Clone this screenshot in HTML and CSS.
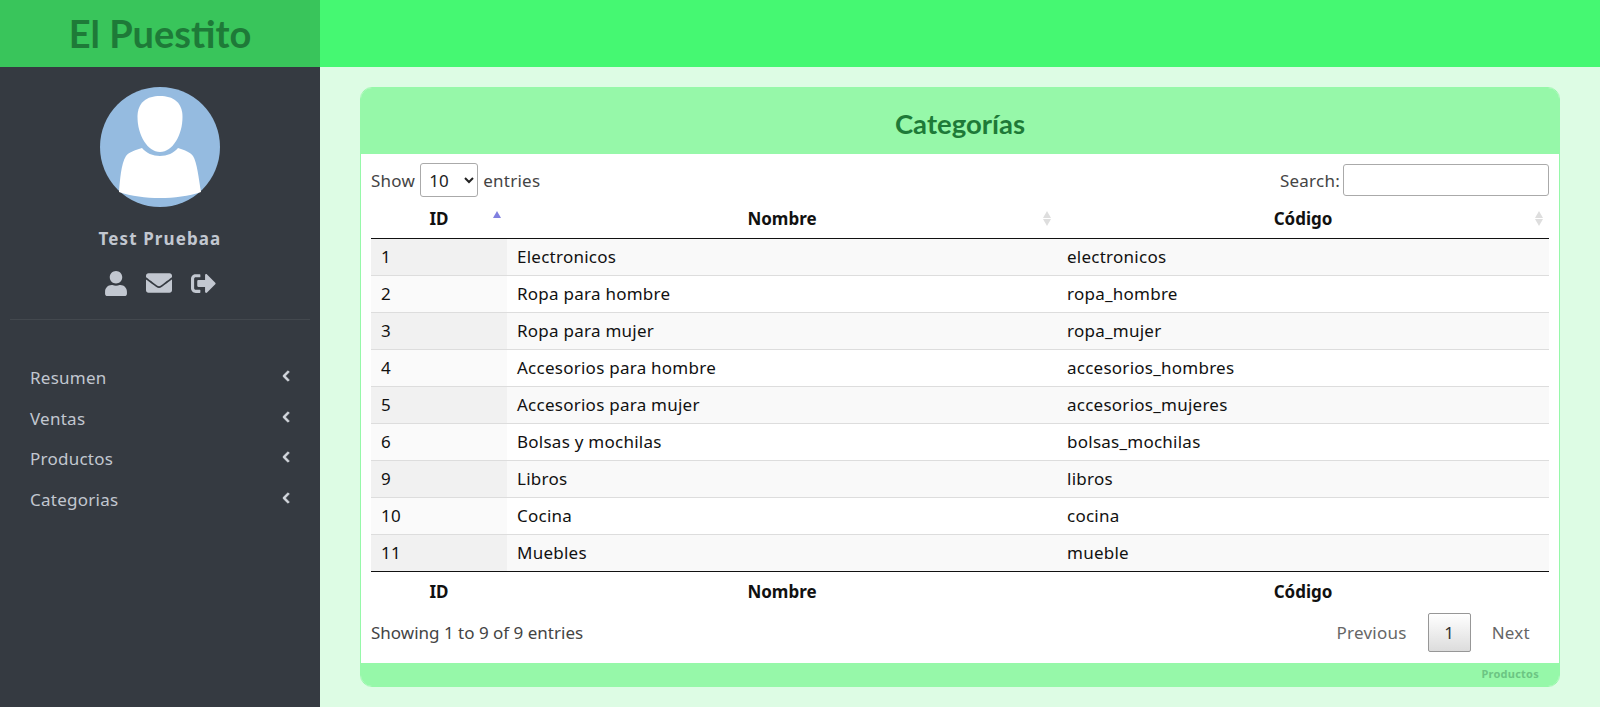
FILE: index.html
```html
<!DOCTYPE html>
<html>
<head>
  <meta charset="utf-8">
  <title>Categorías</title>
  <link rel="stylesheet" href="styles.css">
</head>
<body>
<div class="layout">
  <aside class="sidebar">
    <div class="brand">El Puestito</div>
    <div class="profile">
      <svg class="avatar" viewBox="0 0 120 120">
        <circle cx="60" cy="60" r="60" fill="#95bbe0"/>
        <path d="M60 9c13 0 22.500 6 22.500 21 0 18-10 35-22.500 35S37.500 48 37.500 30C37.500 15 47 9 60 9z" fill="#fff"/>
        <path d="M42 61c4 5 11 8 18 8s14-3 18-8c6 2 12 4 15 8 4 6 6 24 8 36-12 4-27 6-41 6s-29-2-41-6c1-12 2-28 7-36 3-4 10-6 16-8z" fill="#fff"/>
      </svg>
      <div class="username">Test Pruebaa</div>
      <div class="profile-icons">
        <svg class="icon-user" viewBox="0 0 448 512"><path d="M224 256c70.700 0 128-57.300 128-128S294.700 0 224 0 96 57.300 96 128s57.300 128 128 128zm89.600 32h-16.700c-22.200 10.200-46.900 16-72.900 16s-50.600-5.800-72.900-16h-16.700C60.200 288 0 348.200 0 422.400V464c0 26.500 21.500 48 48 48h352c26.500 0 48-21.500 48-48v-41.600c0-74.200-60.200-134.400-134.400-134.400z"/></svg>
        <svg class="icon-mail" viewBox="0 0 512 512"><path d="M502.300 190.800c3.900-3.100 9.700-.2 9.700 4.700V400c0 26.500-21.500 48-48 48H48c-26.500 0-48-21.500-48-48V195.600c0-5 5.700-7.800 9.700-4.700 22.400 17.400 52.100 39.500 154.100 113.600 21.100 15.400 56.700 47.800 92.200 47.600 35.700.3 72-32.800 92.300-47.600 102-74.100 131.600-96.300 154-113.700zM256 320c23.200.4 56.600-29.200 73.400-41.400 132.700-96.300 142.800-104.700 173.400-128.700 5.800-4.500 9.200-11.500 9.200-18.900v-19c0-26.500-21.500-48-48-48H48C21.500 64 0 85.500 0 112v19c0 7.400 3.400 14.300 9.200 18.900 30.600 23.900 40.700 32.400 173.400 128.700 16.800 12.200 50.200 41.800 73.400 41.400z"/></svg>
        <svg class="icon-exit" viewBox="0 0 512 512"><path d="M497 273L329 441c-15 15-41 4.500-41-17v-96H152c-13.300 0-24-10.700-24-24v-96c0-13.300 10.700-24 24-24h136V88c0-21.400 25.900-32 41-17l168 168c9.300 9.400 9.300 24.600 0 34zM192 436v-40c0-6.600-5.400-12-12-12H96c-17.700 0-32-14.300-32-32V160c0-17.700 14.300-32 32-32h84c6.600 0 12-5.400 12-12V76c0-6.600-5.400-12-12-12H96c-53 0-96 43-96 96v192c0 53 43 96 96 96h84c6.600 0 12-5.400 12-12z"/></svg>
      </div>
    </div>
    <nav class="menu">
      <a class="menu-item">Resumen <svg viewBox="0 0 320 512"><path d="M34.520 239.030L228.870 44.690c9.370-9.370 24.570-9.370 33.940 0l22.670 22.670c9.360 9.360 9.370 24.520.04 33.900L131.490 256l154.020 154.750c9.340 9.380 9.320 24.540-.04 33.900l-22.670 22.670c-9.370 9.370-24.570 9.370-33.940 0L34.520 272.970c-9.370-9.370-9.370-24.570 0-33.940z"/></svg></a>
      <a class="menu-item">Ventas <svg viewBox="0 0 320 512"><path d="M34.520 239.030L228.870 44.690c9.370-9.370 24.570-9.370 33.940 0l22.670 22.670c9.360 9.360 9.370 24.520.04 33.900L131.490 256l154.020 154.750c9.340 9.380 9.320 24.540-.04 33.900l-22.670 22.670c-9.370 9.370-24.570 9.370-33.940 0L34.520 272.970c-9.370-9.370-9.370-24.570 0-33.940z"/></svg></a>
      <a class="menu-item">Productos <svg viewBox="0 0 320 512"><path d="M34.520 239.030L228.870 44.690c9.370-9.370 24.570-9.370 33.940 0l22.670 22.670c9.360 9.360 9.370 24.520.04 33.900L131.490 256l154.020 154.750c9.340 9.380 9.320 24.540-.04 33.900l-22.670 22.670c-9.370 9.370-24.570 9.370-33.940 0L34.520 272.970c-9.370-9.370-9.370-24.570 0-33.940z"/></svg></a>
      <a class="menu-item">Categorias <svg viewBox="0 0 320 512"><path d="M34.520 239.030L228.870 44.690c9.370-9.370 24.570-9.370 33.940 0l22.670 22.670c9.360 9.360 9.370 24.520.04 33.900L131.490 256l154.020 154.750c9.340 9.380 9.320 24.540-.04 33.900l-22.670 22.670c-9.370 9.370-24.570 9.370-33.940 0L34.520 272.970c-9.370-9.370-9.370-24.570 0-33.940z"/></svg></a>
    </nav>
  </aside>

  <div class="content">
    <header class="topbar"></header>
    <main class="main">
      <section class="card">
        <h2 class="card-title">Categorías</h2>
        <div class="card-body">
          <div class="table-tools">
            <label class="length">Show
              <select><option>10</option><option>25</option><option>50</option></select>
              entries</label>
            <label class="search">Search: <input type="search"></label>
          </div>
          <table class="data-table">
            <thead>
              <tr>
                <th class="col-id sort-active">ID</th>
                <th class="col-name sort">Nombre</th>
                <th class="col-code sort">Código</th>
              </tr>
            </thead>
            <tbody>
              <tr><td class="sorted">1</td><td>Electronicos</td><td>electronicos</td></tr>
              <tr><td class="sorted">2</td><td>Ropa para hombre</td><td>ropa_hombre</td></tr>
              <tr><td class="sorted">3</td><td>Ropa para mujer</td><td>ropa_mujer</td></tr>
              <tr><td class="sorted">4</td><td>Accesorios para hombre</td><td>accesorios_hombres</td></tr>
              <tr><td class="sorted">5</td><td>Accesorios para mujer</td><td>accesorios_mujeres</td></tr>
              <tr><td class="sorted">6</td><td>Bolsas y mochilas</td><td>bolsas_mochilas</td></tr>
              <tr><td class="sorted">9</td><td>Libros</td><td>libros</td></tr>
              <tr><td class="sorted">10</td><td>Cocina</td><td>cocina</td></tr>
              <tr><td class="sorted">11</td><td>Muebles</td><td>mueble</td></tr>
            </tbody>
            <tfoot>
              <tr><th>ID</th><th>Nombre</th><th>Código</th></tr>
            </tfoot>
          </table>
          <div class="table-bottom">
            <div class="info">Showing 1 to 9 of 9 entries</div>
            <div class="pager">
              <a class="page-link">Previous</a>
              <a class="page-num">1</a>
              <a class="page-link">Next</a>
            </div>
          </div>
        </div>
        <div class="card-foot">Productos</div>
      </section>
    </main>
  </div>
</div>
</body>
</html>
```

FILE: styles.css
```css
* {
  box-sizing: border-box;
}
html, body {
  height: 100%;
}
body {
  margin: 0;
  font-family: "Noto Sans", sans-serif;
  font-size: 17px;
  letter-spacing: .25px;
  color: #444;
  overflow: hidden;
}
.layout {
  display: flex;
  height: 707px;
}

/* sidebar */
.sidebar {
  width: 320px;
  background: #353a41;
  color: #c2c7d0;
}
.brand {
  height: 67px;
  line-height: 67px;
  background: #39c55b;
  color: #1e7a38;
  font-family: Lato, sans-serif;
  font-weight: 700;
  font-size: 38px;
  letter-spacing: 0;
  text-align: center;
}
.profile {
  display: flex;
  flex-direction: column;
  align-items: center;
  margin: 0 10px;
  padding: 20px 0 23px;
  border-bottom: 1px solid #43484e;
}
.avatar {
  width: 120px;
  height: 120px;
}
.username {
  margin-top: 20px;
  font-weight: 700;
  font-size: 17px;
  letter-spacing: 1.100px;
}
.profile-icons {
  display: flex;
  align-items: center;
  gap: 19px;
  margin-top: 20px;
  height: 26px;
}
.profile-icons svg {
  fill: #c2c7d0;
  display: block;
}
.icon-user { width: 22px; height: 25px; }
.icon-mail { width: 26px; height: 26px; }
.icon-exit { width: 25px; height: 25px; }

.menu {
  padding: 37px 30px 0;
}
.menu-item {
  display: flex;
  justify-content: space-between;
  align-items: center;
  height: 40.700px;
}
.menu-item svg {
  width: 8px;
  height: 12px;
  fill: #d4d8de;
  stroke: #d4d8de;
  stroke-width: 36px;
  margin-top: -3px;
}

/* main */
.content {
  flex: 1;
  display: flex;
  flex-direction: column;
  background: #ddfce4;
}
.topbar {
  flex: none;
  height: 67px;
  background: #45f872;
}
.main {
  padding: 20px 40px;
}
.card {
  border: 1px solid #96f8a9;
  border-radius: 12px;
  overflow: hidden;
  background: #fff;
}
.card-title {
  margin: 0;
  height: 66px;
  line-height: 72px;
  background: #96f8a9;
  color: #1e7a38;
  font-family: Lato, sans-serif;
  font-weight: 700;
  font-size: 27.500px;
  letter-spacing: 0;
  text-align: center;
}
.card-body {
  padding: 10px 10px 0;
}
.table-tools {
  display: flex;
  justify-content: space-between;
  align-items: flex-start;
  height: 40px;
}
.length {
  display: flex;
  align-items: center;
  gap: 5px;
  height: 34px;
  margin-top: -1px;
}
.length select {
  width: 58px;
  height: 34px;
  padding: 0 4px;
  border: 1px solid #aaa;
  border-radius: 3px;
  background: #fff;
  font: inherit;
  color: #222;
}
.search {
  display: flex;
  align-items: center;
  gap: 3px;
  height: 32px;
}
.search input {
  width: 206px;
  height: 32px;
  border: 1px solid #aaa;
  border-radius: 3px;
  background: #fff;
}

/* table */
.data-table {
  width: 100%;
  border-collapse: collapse;
  table-layout: fixed;
  color: #111;
}
.data-table th {
  height: 34px;
  padding: 0 18px;
  text-align: center;
  font-weight: 700;
  letter-spacing: 0;
  color: #111;
}
.data-table thead th {
  padding-bottom: 5px;
  border-bottom: 1px solid #111;
  position: relative;
}
.data-table tfoot th {
  padding-top: 2px;
  border-top: 1px solid #111;
  height: 39px;
}
.col-id { width: 136px; }
.col-name { width: 550px; }
.data-table td {
  height: 37px;
  padding: 0 10px;
  border-top: 1px solid #ddd;
  background: #f9f9f9;
}
.data-table tbody tr:nth-child(even) td {
  background: #fff;
}
.data-table tbody tr:first-child td {
  border-top: none;
}
.data-table td.sorted {
  background: #f1f1f1;
}
.data-table tbody tr:nth-child(even) td.sorted {
  background: #fafafa;
}

/* sort arrows */
.sort::before, .sort::after, .sort-active::before {
  content: "";
  position: absolute;
  right: 6px;
  border-left: 4.500px solid transparent;
  border-right: 4.500px solid transparent;
}
.sort::before {
  top: 7px;
  border-bottom: 7px solid #dedede;
}
.sort::after {
  top: 15px;
  border-top: 7px solid #dedede;
}
.sort-active::before {
  top: 7px;
  border-bottom: 7px solid #8080e0;
}

.table-bottom {
  display: flex;
  justify-content: space-between;
  align-items: center;
  padding: 3px 0 11px;
}
.info {
  letter-spacing: 0;
}
.pager {
  display: flex;
  align-items: center;
  color: #666;
  margin-right: -2px;
}
.page-link {
  padding: 0 21px;
}
.page-num {
  width: 43px;
  height: 39px;
  line-height: 37px;
  text-align: center;
  color: #333;
  border: 1px solid #979797;
  border-radius: 2px;
  background: linear-gradient(#fff, #dcdcdc);
}
.card-foot {
  height: 23px;
  padding-right: 20px;
  background: #96f8a9;
  color: #6cc583;
  font-size: 11px;
  font-weight: 700;
  line-height: 22px;
  text-align: right;
}
```
